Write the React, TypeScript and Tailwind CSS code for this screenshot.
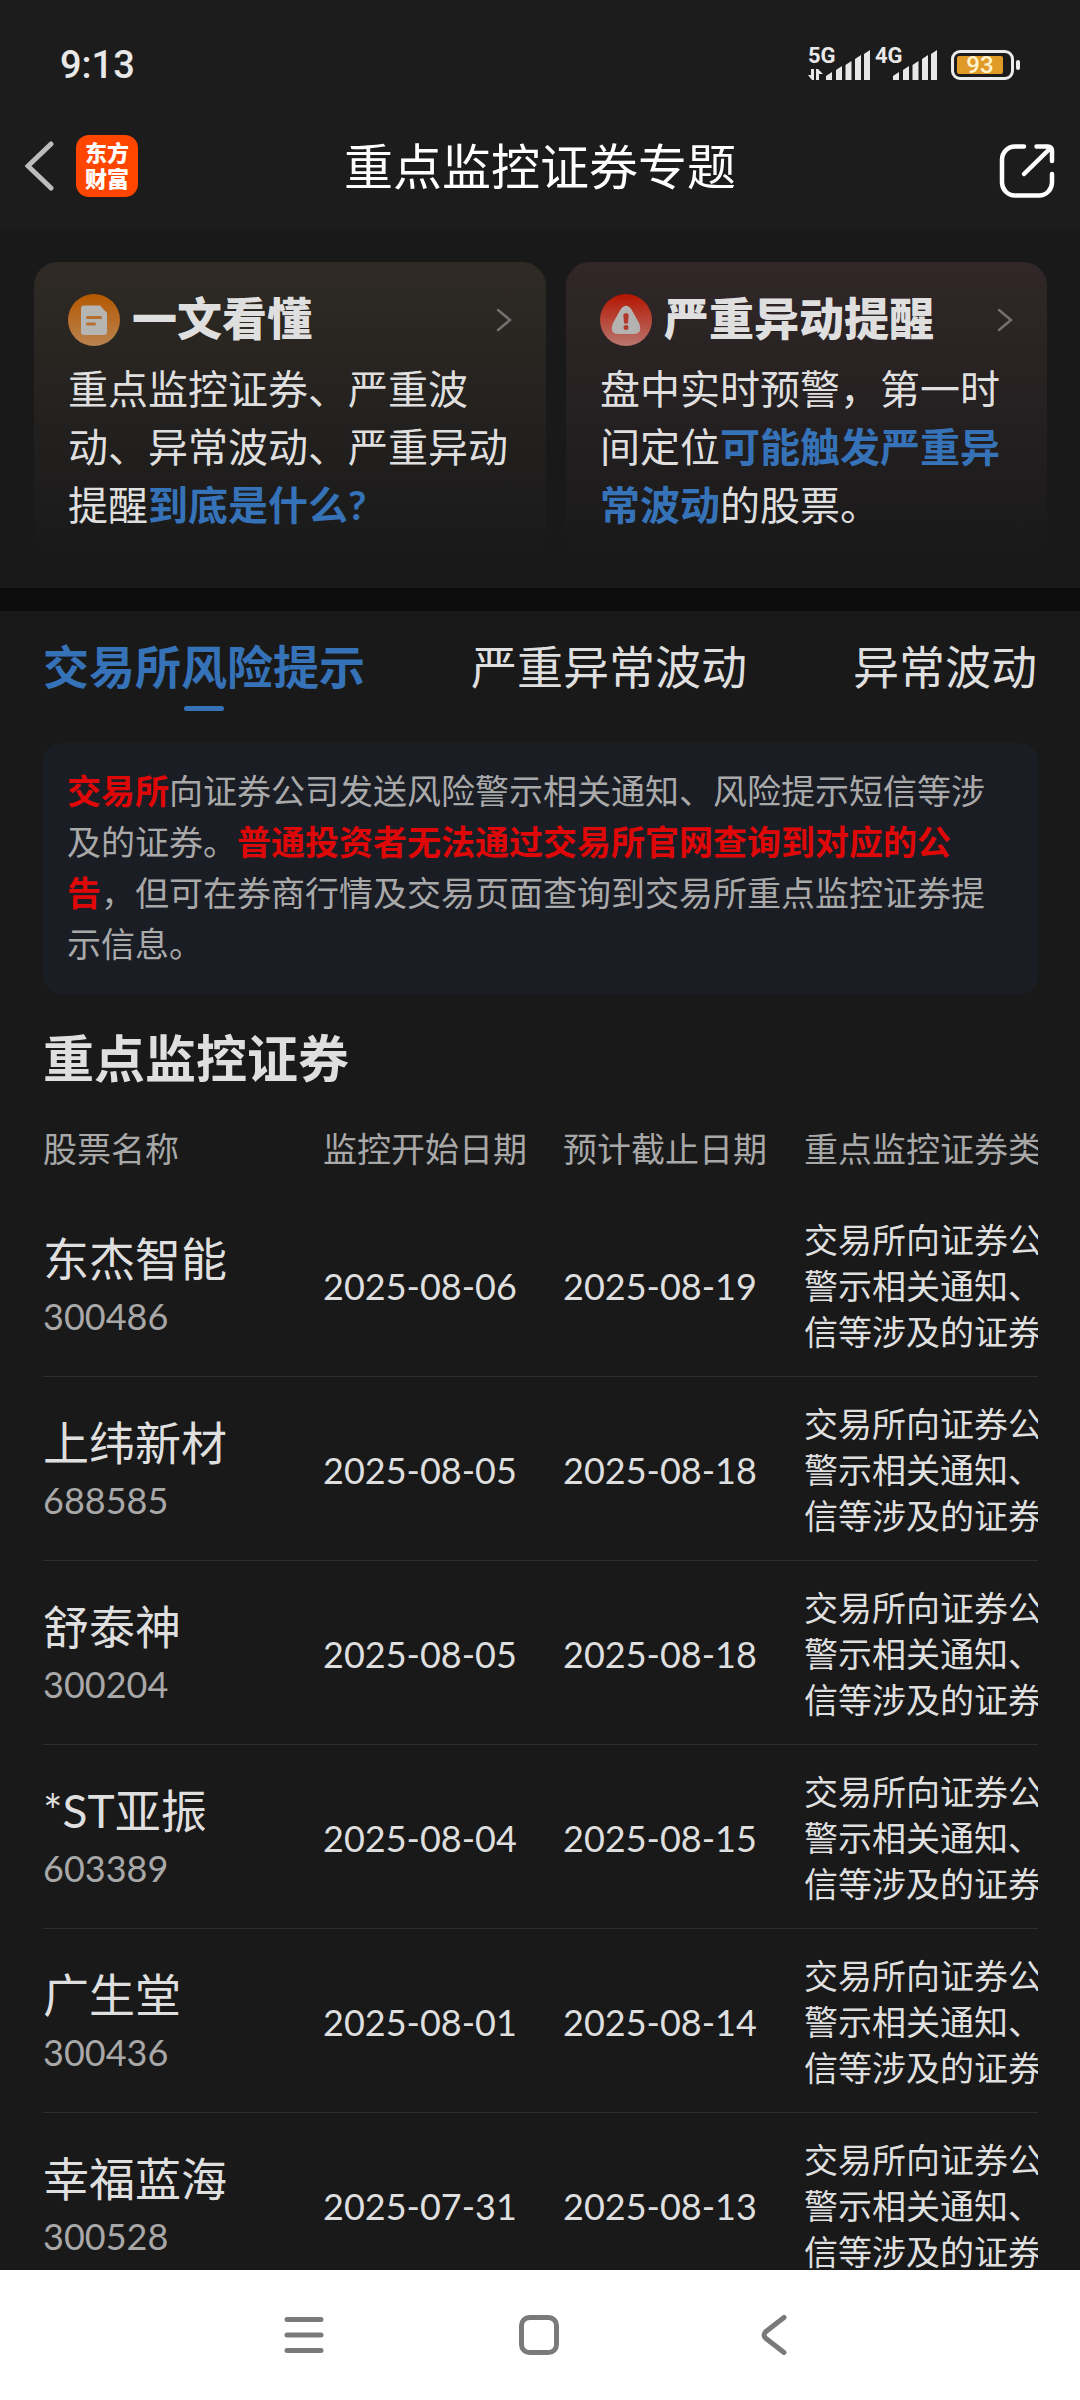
import React, { useState } from "react";

interface Stock {
  name: string;
  code: string;
  start: string;
  end: string;
}

const stocks: Stock[] = [
  { name: "东杰智能", code: "300486", start: "2025-08-06", end: "2025-08-19" },
  { name: "上纬新材", code: "688585", start: "2025-08-05", end: "2025-08-18" },
  { name: "舒泰神", code: "300204", start: "2025-08-05", end: "2025-08-18" },
  { name: "*ST亚振", code: "603389", start: "2025-08-04", end: "2025-08-15" },
  { name: "广生堂", code: "300436", start: "2025-08-01", end: "2025-08-14" },
  { name: "幸福蓝海", code: "300528", start: "2025-07-31", end: "2025-08-13" },
];

const monitorType = "交易所向证券公司发送风险警示相关通知、风险提示短信等涉及的证券";

const tabs = ["交易所风险提示", "严重异常波动", "异常波动"];

const Signal: React.FC<{ label: string; data?: boolean }> = ({ label, data }) => (
  <div className="relative h-[33px] w-[62px]">
    <span className="absolute left-0 top-0 font-[Roboto] text-[22px] font-bold leading-[17px]">{label}</span>
    <svg className="h-[33px] w-[62px]" viewBox="0 0 62 33" fill="currentColor">
      {data && <path d="M0 28l4 5h2V22H3v6zM8 22h2l5 5h-4v6H8z" />}
      <path d="M18 29l6-4v8h-6zM28 23l6-4v14h-6zM37.500 18l6-4v19h-6zM47 12l6-4v25h-6zM56 7l6-4v30h-6z" />
    </svg>
  </div>
);

const StatusBar = () => (
  <div className="flex h-[126px] items-center justify-between px-[60px] text-[#e8e8e8]">
    <span className="pt-1 font-[Roboto] text-[38px] font-medium leading-[44px]">9:13</span>
    <div className="flex items-end">
      <Signal label="5G" data />
      <div className="ml-[5px]">
        <Signal label="4G" />
      </div>
      <div className="ml-[14px] flex items-center gap-[2px]">
        <div className="flex h-[30px] w-[63px] rounded-[9px] border-[3px] border-[#ebebeb] p-[3px]">
          <div className="flex w-[46px] items-center justify-center rounded-[2px] bg-[#df9a28] font-[Roboto] text-[24px] font-medium leading-[18px] text-[#fff3cf]">
            93
          </div>
        </div>
        <div className="h-[10px] w-[4px] rounded-[2px] bg-[#ebebeb]" />
      </div>
    </div>
  </div>
);

const TitleBar = () => (
  <div className="grid h-[80px] grid-cols-[1fr_auto_1fr] items-center px-[25px]">
    <div className="flex items-center gap-[21px]">
      <button type="button" aria-label="返回">
        <svg className="h-[52px] w-[30px]" viewBox="0 0 30 52" fill="none" stroke="#bcbcbc" strokeWidth="5" strokeLinecap="round">
          <path d="M26 4L3 26l23 22" />
        </svg>
      </button>
      <div className="flex h-[62px] w-[62px] flex-col items-center justify-center rounded-[13px] bg-[#ff4600] text-[22px] font-black leading-[26px] text-white">
        <span>东方</span>
        <span>财富</span>
      </div>
    </div>
    <h1 className="text-[49px] leading-[60px] text-white">重点监控证券专题</h1>
    <button type="button" aria-label="分享" className="justify-self-end">
      <svg className="h-[64px] w-[56px]" viewBox="0 0 56 64" fill="none" stroke="#fff" strokeWidth="4.500" strokeLinecap="round" strokeLinejoin="round">
        <path d="M25 12.500H16A13 13 0 0 0 3 25.500V48A13 13 0 0 0 16 61.500H40A13 13 0 0 0 53 48V40" />
        <path d="M37.500 12.500H49A4 4 0 0 1 53 16.500V27M51 14.500L25 40" />
      </svg>
    </button>
  </div>
);

const Chevron = () => (
  <svg className="h-[24px] w-[16px]" viewBox="0 0 16 24" fill="none" stroke="#737170" strokeWidth="2.500" strokeLinecap="round">
    <path d="M2 2l12 10L2 22" />
  </svg>
);

const DocIcon = () => (
  <svg className="h-[52px] w-[52px]" viewBox="0 0 52 52">
    <defs>
      <linearGradient id="doc" x1="0" y1="0" x2="0" y2="1">
        <stop offset="0" stopColor="#b55800" />
        <stop offset="1" stopColor="#b98350" />
      </linearGradient>
    </defs>
    <circle cx="26" cy="26" r="26" fill="url(#doc)" />
    <path d="M16 11.500H32L39 19V38a3 3 0 0 1-3 3H16a3 3 0 0 1-3-3V14.500a3 3 0 0 1 3-3z" fill="#b5b5b3" />
    <path d="M19.500 23.500h13M19.500 30h7" stroke="#b76f2f" strokeWidth="3" strokeLinecap="round" />
  </svg>
);

const AlertIcon = () => (
  <svg className="h-[52px] w-[52px]" viewBox="0 0 52 52">
    <defs>
      <linearGradient id="alert" x1="0" y1="0" x2="0" y2="1">
        <stop offset="0" stopColor="#b41500" />
        <stop offset="1" stopColor="#b9766e" />
      </linearGradient>
    </defs>
    <circle cx="26" cy="26" r="26" fill="url(#alert)" />
    <path d="M20.500 15.500Q26 8 31.500 15.500L39 29Q43 39.500 34 40H18Q9 39.500 13 29z" fill="#b5b3b2" />
    <path d="M23.300 20.500q2.700-3 5.400 0L28 29.500h-4z" fill="#b23a2c" />
    <circle cx="26" cy="33.500" r="2.500" fill="#b23a2c" />
  </svg>
);

const InfoCard: React.FC<{ icon: React.ReactNode; title: string; className: string; children: React.ReactNode }> = ({
  icon,
  title,
  className,
  children,
}) => (
  <a href="#" className={`block rounded-[24px] px-[34px] pb-[23px] pt-[32px] ${className}`}>
    <div className="mb-[14px] flex items-center">
      {icon}
      <h2 className="ml-3 pb-[2px] text-[45px] font-black leading-[50px]">{title}</h2>
      <span className="ml-auto">
        <Chevron />
      </span>
    </div>
    <p className="text-[40px] leading-[58px]">{children}</p>
  </a>
);

export default function App() {
  const [active, setActive] = useState(0);

  return (
    <div
      lang="zh-CN"
      className="flex h-screen flex-col overflow-hidden bg-[#19191a] font-[Lato,'Noto_Sans_CJK_SC',sans-serif] text-[#dfdfdf]"
    >
      <header className="shrink-0 bg-[#1c1c1c] pb-[23px]">
        <StatusBar />
        <TitleBar />
      </header>

      <main className="min-h-0 flex-1 overflow-hidden">
        <section className="grid grid-cols-[512fr_481fr] gap-5 pb-[31px] pl-[34px] pr-[33px] pt-[33px]">
          <InfoCard icon={<DocIcon />} title="一文看懂" className="bg-linear-to-b from-[#2f2a24] to-[#19191a]">
            重点监控证券、严重波动、异常波动、严重异动提醒<b className="text-[#3572b8]">到底是什么?</b>
          </InfoCard>
          <InfoCard icon={<AlertIcon />} title="严重异动提醒" className="bg-linear-to-b from-[#312728] to-[#19191a]">
            盘中实时预警，第一时间定位<b className="text-[#3572b8]">可能触发严重异常波动</b>的股票。
          </InfoCard>
        </section>

        <div className="h-[23px] bg-[#0d0d0d]" />

        {/* Tabs */}
        <nav className="flex justify-between px-[43px] pt-[32px]">
          {tabs.map((tab, i) => (
            <button key={tab} type="button" onClick={() => setActive(i)} className="flex flex-col items-center pb-[32px]">
              <span className={`text-[46px] leading-[48px] ${i === active ? "font-bold text-[#3572b8]" : ""}`}>{tab}</span>
              <span className={`mt-[15px] h-[5px] w-10 rounded-full ${i === active ? "bg-[#3572b8]" : ""}`} />
            </button>
          ))}
        </nav>

        <div className="pl-[43px] pr-[42px]">
          <p className="rounded-[18px] bg-[#1a1d24] px-6 pb-[25px] pt-[22px] text-[34px] leading-[51px] text-[#a9a9aa]">
            <b className="text-[#df0808]">交易所</b>向证券公司发送风险警示相关通知、风险提示短信等涉及的证券。
            <b className="text-[#df0808]">普通投资者无法通过交易所官网查询到对应的公告</b>
            ，但可在券商行情及交易页面查询到交易所重点监控证券提示信息。
          </p>

          <h2 className="mt-[30px] text-[51px] font-bold leading-[70px]">重点监控证券</h2>

          <div className="mt-[9px] overflow-x-auto overflow-y-hidden [scrollbar-width:none]">
            <table className="w-[1180px] table-fixed text-left">
              <thead>
                <tr className="h-[90px] text-[34px] text-[#a8a8a8]">
                  <th className="w-[280px] font-normal">股票名称</th>
                  <th className="w-[240px] font-normal">监控开始日期</th>
                  <th className="w-[241px] font-normal">预计截止日期</th>
                  <th className="font-normal">重点监控证券类型</th>
                </tr>
              </thead>
              <tbody>
                {stocks.map((s) => (
                  <tr key={s.code} className="border-b border-[#2e2e30]">
                    <td className="pb-[21px] pt-6">
                      <div className="text-[46px] leading-[60px]">{s.name}</div>
                      <div className="text-[36px] leading-[54px] text-[#a8a8a8]">{s.code}</div>
                    </td>
                    <td className="pb-[21px] pt-6 text-[36px] leading-[46px]">{s.start}</td>
                    <td className="pb-[21px] pt-6 text-[36px] leading-[46px]">{s.end}</td>
                    <td className="pb-[21px] pt-6 text-[34px] leading-[46px]">{monitorType}</td>
                  </tr>
                ))}
              </tbody>
            </table>
          </div>
        </div>
      </main>

      {/* System navigation */}
      <footer className="flex h-[130px] shrink-0 items-center justify-center bg-white pr-[2px]">
        <button type="button" aria-label="最近任务" className="flex w-[235px] justify-center">
          <svg className="h-[42px] w-[42px]" viewBox="0 0 42 42" fill="none" stroke="#7a7a7a" strokeWidth="5" strokeLinecap="round">
            <path d="M4 5.500h34M4 21h34M4 36.500h34" />
          </svg>
        </button>
        <button type="button" aria-label="主屏幕" className="flex w-[235px] justify-center">
          <svg className="h-[42px] w-[42px]" viewBox="0 0 42 42" fill="none" stroke="#7a7a7a" strokeWidth="5">
            <rect x="3.500" y="3.500" width="35" height="35" rx="8" />
          </svg>
        </button>
        <button type="button" aria-label="后退" className="flex w-[235px] justify-center">
          <svg className="h-[42px] w-[28px]" viewBox="0 0 28 42" fill="none" stroke="#7a7a7a" strokeWidth="5" strokeLinecap="round">
            <path d="M24 3.500L6 17.500Q2 21 6 24.500L24 38.500" />
          </svg>
        </button>
      </footer>
    </div>
  );
}
